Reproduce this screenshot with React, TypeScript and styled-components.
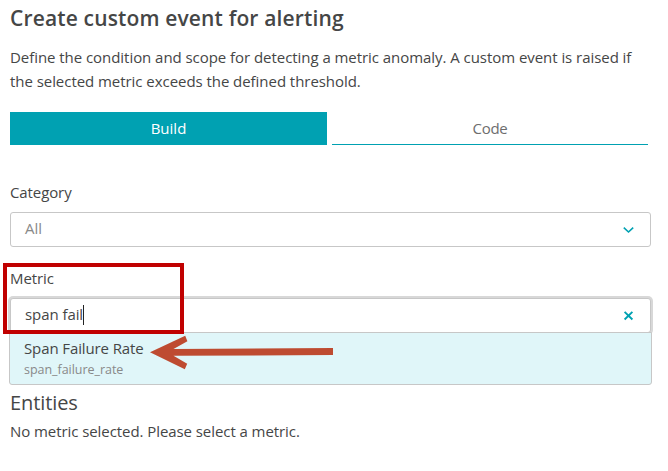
import React from "react";
import styled, { createGlobalStyle } from "styled-components";

const GlobalStyle = createGlobalStyle`
  *, *::before, *::after { box-sizing: border-box; }
  body {
    margin: 0;
    background: #fff;
    color: #454646;
    font-family: "Open Sans", "Noto Sans", sans-serif;
    font-size: 15px;
    line-height: 24px;
    letter-spacing: -0.07px;
  }
`;

const Page = styled.main`
  position: relative;
  width: 668px;
  height: 471px;
  padding: 5px 17px 0 10px;
  overflow: hidden;
  display: flex;
  flex-direction: column;
`;

const Title = styled.h1`
  margin: 0;
  font-size: 21px;
  line-height: 26px;
  font-weight: 600;
  letter-spacing: 0.15px;
`;

const Description = styled.p`
  margin: 14px 0 0;
  letter-spacing: -0.05px;
  white-space: nowrap;
`;

const Tabs = styled.div`
  display: grid;
  grid-template-columns: 317px 316px;
  gap: 5px;
  height: 33px;
  margin-top: 19px;
`;

const Tab = styled.button<{ $active?: boolean }>`
  border: 0;
  border-bottom: 1px solid #00a1b2;
  padding: 0;
  background: ${(p) => (p.$active ? "#00a1b2" : "transparent")};
  color: ${(p) => (p.$active ? "#fff" : "#6d6d6d")};
  font: inherit;
  font-weight: ${(p) => (p.$active ? 500 : 400)};
  letter-spacing: ${(p) => (p.$active ? 0 : -0.3)}px;
`;

const Field = styled.section<{ $gap: number }>`
  display: flex;
  flex-direction: column;
  margin-top: ${(p) => p.$gap}px;
`;

const Label = styled.label`
  height: 24px;
  letter-spacing: -0.1px;
`;

const Control = styled.div<{ $focused?: boolean }>`
  display: flex;
  align-items: center;
  justify-content: space-between;
  height: 35px;
  margin-top: 8px;
  padding: 0 16px 0 14px;
  border: 1px solid #c7c7c7;
  border-radius: 3px;
  background: #fff;
  box-shadow: ${(p) => (p.$focused ? "0 0 0 2px #d8d8d8" : "none")};
  color: ${(p) => (p.$focused ? "#454646" : "#898989")};
`;

const Value = styled.span`
  display: flex;
  align-items: center;
  padding-bottom: 3px;
`;

const Caret = styled.span`
  width: 1px;
  height: 20px;
  margin-top: 2px;
  background: #222;
`;

const Options = styled.div`
  position: relative;
  height: 53px;
  margin: -1px -1px 0;
  padding: 5px 13px 0 14px;
  border: 1px solid #c7c7c7;
  border-radius: 0 0 3px 3px;
  background: #e0f6f9;
`;

const OptionName = styled.div`
  line-height: 21px;
  letter-spacing: -0.11px;
`;

const OptionKey = styled.div`
  color: #898989;
  font-size: 12.5px;
  line-height: 21px;
  letter-spacing: -0.04px;
`;

const Heading = styled.h2`
  margin: 4px 0 0;
  font-size: 20px;
  line-height: 28px;
  font-weight: 400;
  letter-spacing: -0.1px;
`;

const Empty = styled.p`
  margin: 2px 0 0;
`;

const Highlight = styled.div`
  position: absolute;
  left: 3px;
  top: 263px;
  width: 181px;
  height: 71px;
  border: 4px solid #c00000;
`;

const Arrow = styled.svg`
  position: absolute;
  left: 150px;
  top: 335px;
`;

export default function App() {
  return (
    <>
      <GlobalStyle />
      <Page>
        <Title>Create custom event for alerting</Title>
        <Description>
          Define the condition and scope for detecting a metric anomaly. A custom event is raised if
          <br />
          the selected metric exceeds the defined threshold.
        </Description>
        <Tabs>
          <Tab $active>Build</Tab>
          <Tab>Code</Tab>
        </Tabs>
        <Field $gap={35}>
          <Label>Category</Label>
          <Control>
            <Value>All</Value>
            <svg width="12" height="12" viewBox="0 0 12 12" fill="none" stroke="#00a1b2" strokeWidth="1.6">
              <path d="M1.8 3.6 6.5 8 11.2 3.6" />
            </svg>
          </Control>
        </Field>
        <Field $gap={19}>
          <Label>Metric</Label>
          <Control $focused>
            <Value>
              span fail
              <Caret />
            </Value>
            <svg width="12" height="12" viewBox="0 0 12 12" fill="none" stroke="#00a1b2" strokeWidth="1.9">
              <path d="M2.6 1.9 10.4 9.5M10.4 1.9 2.6 9.5" />
            </svg>
          </Control>
          <Options>
            <OptionName>Span Failure Rate</OptionName>
            <OptionKey>span_failure_rate</OptionKey>
          </Options>
        </Field>
        <Heading>Entities</Heading>
        <Empty>No metric selected. Please select a metric.</Empty>
        <Highlight />
        <Arrow width="184" height="36" viewBox="0 0 184 36" fill="#be4b31">
          <path d="M0 17.3 35.2.8 37.4 6.3 23.5 14 183 13.1V20L23.5 20.8 37.2 28.8 34.8 34.3Z" />
        </Arrow>
      </Page>
    </>
  );
}
